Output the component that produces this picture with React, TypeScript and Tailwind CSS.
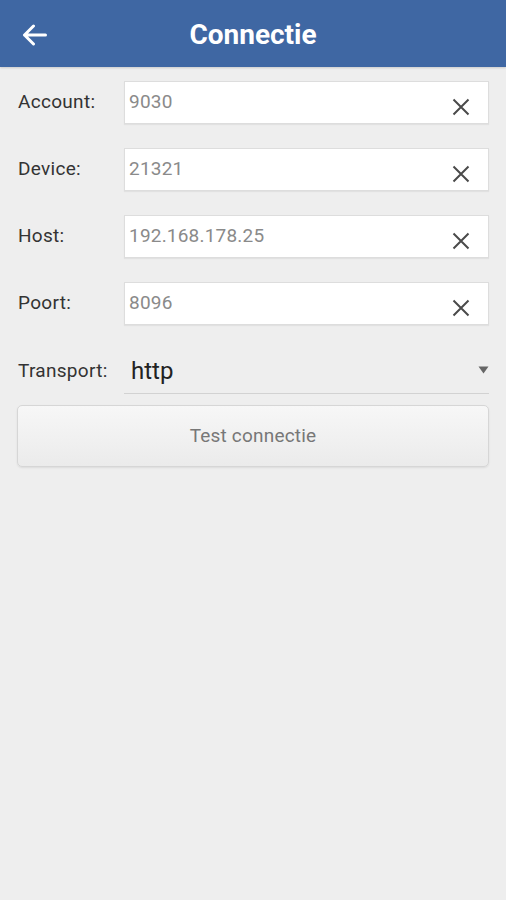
import React from "react";

const fields = [
  { label: "Account:", value: "9030" },
  { label: "Device:", value: "21321" },
  { label: "Host:", value: "192.168.178.25" },
  { label: "Poort:", value: "8096" },
];

const ClearIcon = () => (
  <svg width="18" height="18" viewBox="0 0 18 18" className="mb-[7px] mr-[18px] self-end shrink-0">
    <path d="M1.5 1.5 L16.5 16.5 M16.5 1.5 L1.5 16.5" stroke="#4a4a4a" strokeWidth="2" fill="none" />
  </svg>
);

const BackArrow = () => (
  <svg width="25" height="22" viewBox="0 0 25 22">
    <path
      d="M23.5 11 H2.5 M11.5 2 L2.5 11 L11.5 20"
      stroke="#ffffff"
      strokeWidth="3"
      fill="none"
      strokeLinecap="round"
      strokeLinejoin="round"
    />
  </svg>
);

const App: React.FC = () => {
  return (
    <div className="min-h-[900px] w-full bg-[#eeeeee] font-['Roboto','Liberation_Sans',sans-serif]">
      <header className="flex h-[67px] items-center bg-[#3f67a3] px-[22px] pt-[2px] shadow-[0_1px_2px_rgba(0,0,0,0.15)]">
        <button type="button" className="flex w-[25px] items-center">
          <BackArrow />
        </button>
        <h1 className="flex-1 text-center text-[28px] font-bold text-white">Connectie</h1>
        <div className="w-[25px]" />
      </header>

      <div className="px-[17px] pt-[14px]">
        {fields.map((f) => (
          <div key={f.label} className="mb-[24px] flex h-[43px] items-center">
            <div className="w-[107px] pl-[1px] text-[19px] tracking-[0.3px] text-[#333333]">{f.label}</div>
            <div className="flex h-full flex-1 items-center border border-[#dddddd] bg-white shadow-[0_1px_1px_rgba(0,0,0,0.05)]">
              <span className="flex-1 pl-[4px] text-[19px] tracking-[0.2px] text-[#8a8a8a]">{f.value}</span>
              <ClearIcon />
            </div>
          </div>
        ))}

        <div className="flex h-[45px] items-center">
          <div className="w-[107px] pl-[1px] text-[19px] tracking-[0.3px] text-[#333333]">Transport:</div>
          <div className="flex h-full flex-1 items-center border-b border-[#d2d2d2] pl-[7px]">
            <span className="flex-1 text-[24px] text-[#222222]">http</span>
            <svg width="11" height="8" viewBox="0 0 11 8" className="mb-[2px]">
              <path d="M0.5 0.5 L10.5 0.5 L5.5 7.5 Z" fill="#666666" />
            </svg>
          </div>
        </div>

        <button
          type="button"
          className="mt-[11px] flex h-[62px] w-full items-center justify-center rounded-[5px] border border-[#d6d6d6] bg-gradient-to-b from-[#f7f7f7] to-[#ebebeb] text-[19px] tracking-[0.2px] text-[#777777] shadow-[0_1px_2px_rgba(0,0,0,0.08)]"
        >
          Test connectie
        </button>
      </div>
    </div>
  );
};

export default App;
